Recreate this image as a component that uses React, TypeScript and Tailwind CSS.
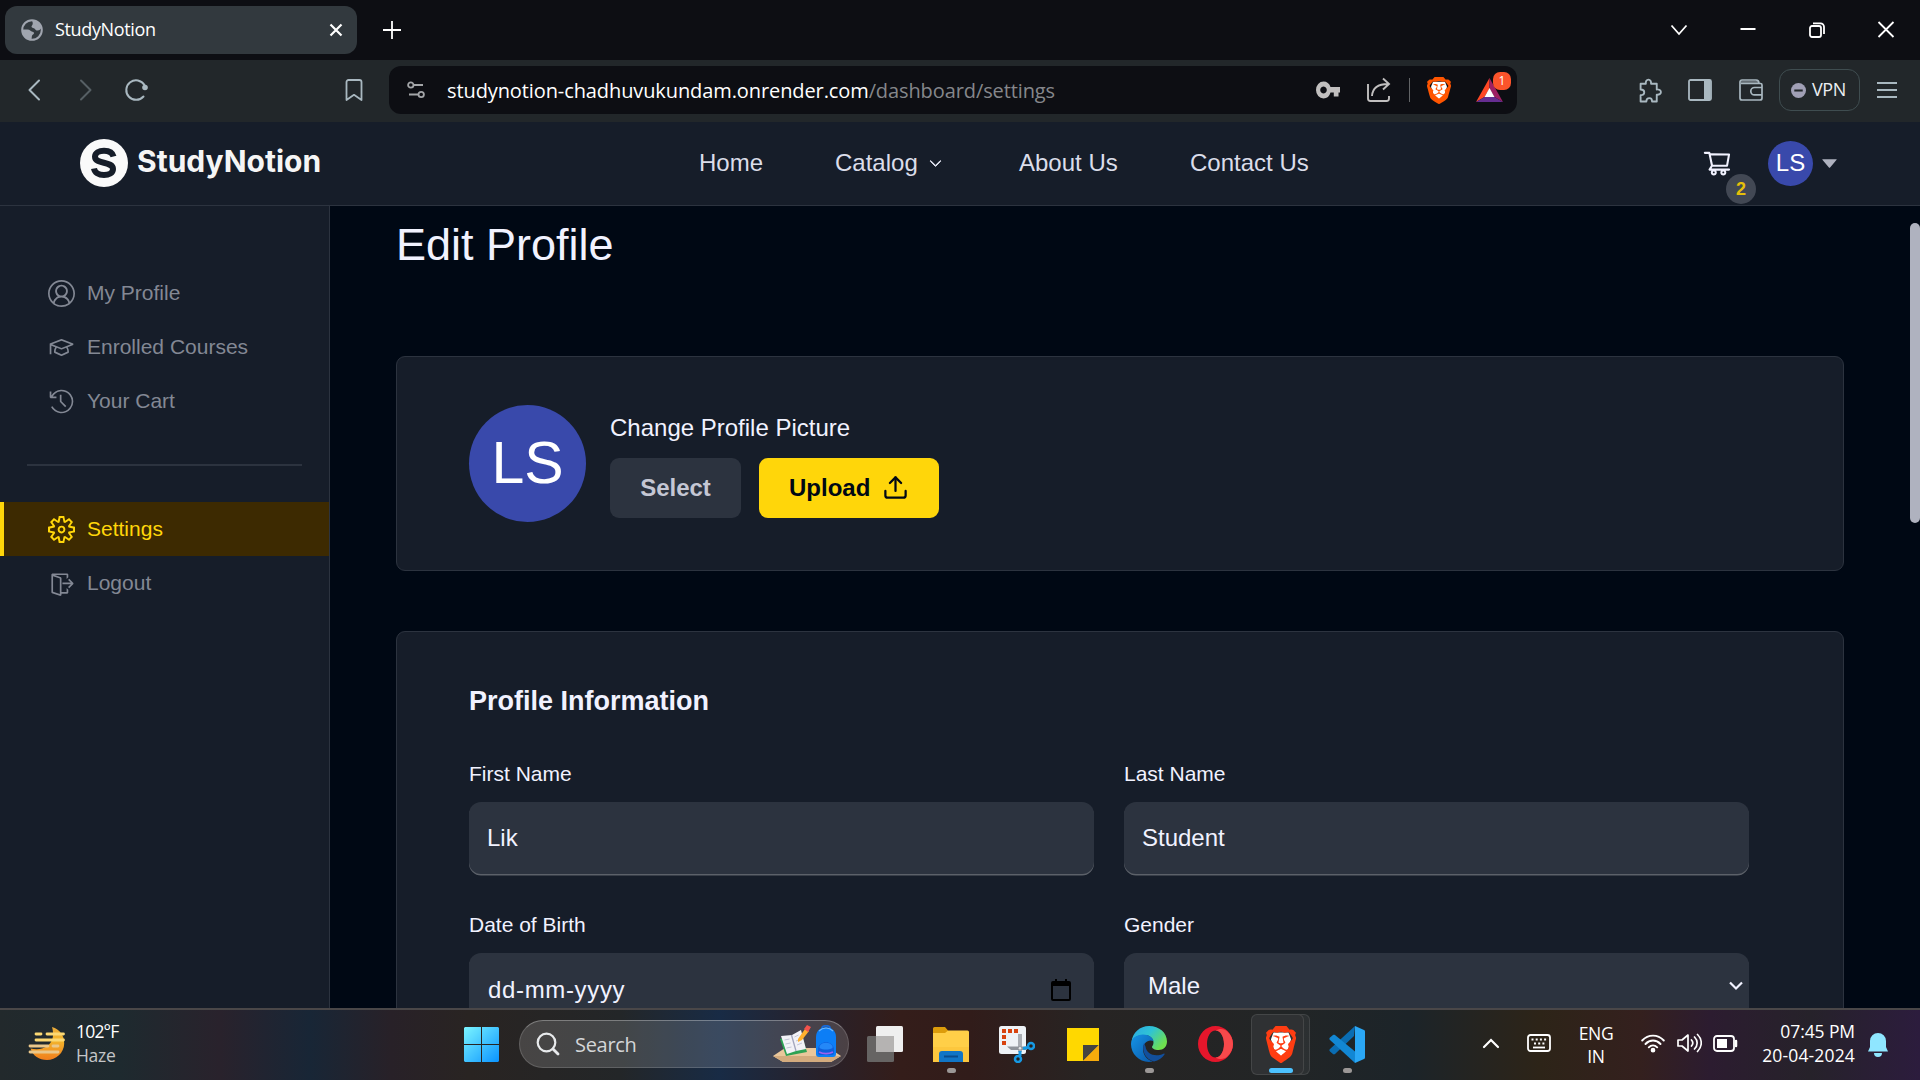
import React from "react";
import { VscAccount, VscMortarBoard, VscHistory, VscSettingsGear, VscSignOut } from "react-icons/vsc";
import { AiOutlineShoppingCart, AiOutlineCaretDown } from "react-icons/ai";
import { FiUpload } from "react-icons/fi";
import { BsChevronDown } from "react-icons/bs";
import { SiBrave } from "react-icons/si";

const SEGOE = "font-['Open_Sans','Noto_Sans',sans-serif]";

function BraveLion({ className, color }: { className: string; color: string }) {
  return (
    <span className={`relative block ${className}`}>
      <svg viewBox="0 0 24 28" preserveAspectRatio="none" className="absolute inset-0 h-full w-full">
        <path d="M6 5h12l2 5-3 10-5 5-5-5L4 10z" fill="#fff" />
      </svg>
      <SiBrave preserveAspectRatio="none" viewBox="1.9 0 20.2 24" color={color} className="relative h-full w-full" />
    </span>
  );
}

function TabStrip() {
  return (
    <div className="flex h-[60px] shrink-0 items-center bg-[#0d0e13] text-white">
      <div className="ml-[5px] flex h-12 w-[352px] items-center rounded-xl bg-[#32393e] pl-4 pr-[14px]">
        <svg viewBox="0 0 22 22" className="h-[22px] w-[22px]">
          <circle cx="11" cy="11" r="9.8" fill="#32393e" stroke="#a0a5af" strokeWidth="2" />
          <path d="M11 1.500C15 1 19 4 20.500 9c-1 1-2 2.500-4 2.500-2.500 0-2-2-4.500-2.500-1.500-.3-2-1.500-1-2.500 1-1 1-3 0-5zM1.300 10.500l5.200 0c2.500 0 3 2 5 2.300 2 .3 2 2.200.2 3C10.500 16.500 11 18 10.500 20.500 5 20.500 1 16 1.300 10.500z" fill="#a0a5af" />
        </svg>
        <span className={`-mt-px ml-[12px] text-[18px] tracking-[-0.35px] ${SEGOE}`}>StudyNotion</span>
        <svg viewBox="0 0 14 14" className="ml-auto h-[14px] w-[14px]" stroke="#fff" strokeWidth="2.200">
          <path d="M1.500 1.500l11 11M12.500 1.500l-11 11" />
        </svg>
      </div>
      <svg viewBox="0 0 20 20" className="ml-[24.500px] h-5 w-5" stroke="#fff" strokeWidth="1.800">
        <path d="M10 1v18M1 10h18" />
      </svg>
      <div className="ml-auto mr-[25.500px] flex items-center gap-[51px]">
        <svg viewBox="0 0 18 18" className="h-[18px] w-[18px]" fill="none" stroke="#fff" strokeWidth="1.800">
          <path d="M1.500 4.500L9 13l7.500-8.500" />
        </svg>
        <svg viewBox="0 0 18 18" className="h-[18px] w-[18px]" stroke="#fff" strokeWidth="2">
          <path d="M1.500 8h15" />
        </svg>
        <svg viewBox="0 0 18 18" className="h-[18px] w-[18px]" fill="none" stroke="#fff" strokeWidth="1.800">
          <rect x="2" y="5" width="11" height="11" rx="2" />
          <path d="M5 2.300h7.500a3.500 3.500 0 0 1 3.500 3.500V13" />
        </svg>
        <svg viewBox="0 0 18 18" className="h-[18px] w-[18px]" stroke="#fff" strokeWidth="1.800">
          <path d="M1.500 1l15 15M16.500 1l-15 15" />
        </svg>
      </div>
    </div>
  );
}

function Toolbar() {
  return (
    <div className="flex h-[62px] shrink-0 items-center bg-[#22272a] pb-[2px]">
      <svg viewBox="0 0 28 28" className="ml-5 h-7 w-7" fill="none" stroke="#a9b8c0" strokeWidth="2" strokeLinecap="round" strokeLinejoin="round">
        <path d="M19 4.500L9.500 14l9.500 9.500" />
      </svg>
      <svg viewBox="0 0 28 28" className="ml-[23px] h-7 w-7" fill="none" stroke="#565f64" strokeWidth="2" strokeLinecap="round" strokeLinejoin="round">
        <path d="M10 4.500l9.500 9.500-9.500 9.500" />
      </svg>
      <svg viewBox="0 0 28 28" className="ml-[23px] h-7 w-7" fill="none" stroke="#a9b8c0" strokeWidth="2" strokeLinecap="round">
        <path d="M21.500 20.500A9.800 9.800 0 1 1 22.500 9" />
        <circle cx="23" cy="11.500" r="2.800" fill="#a9b8c0" stroke="none" />
      </svg>
      <svg viewBox="0 0 28 28" className="ml-[190px] h-7 w-7" fill="none" stroke="#a9b8c0" strokeWidth="1.800" strokeLinejoin="round">
        <path d="M6.500 6a2 2 0 0 1 2-2h11a2 2 0 0 1 2 2v18L14 18.800 6.500 24z" />
      </svg>
      <div className="ml-[21px] flex h-12 w-[1128px] items-center rounded-xl bg-[#0d0e13]">
        <svg viewBox="0 0 18 18" className="ml-[18px] h-[18px] w-[18px]" fill="none" stroke="#a3a5a8" strokeWidth="1.800">
          <circle cx="3.800" cy="4" r="2.700" />
          <circle cx="14.200" cy="13.500" r="2.700" />
          <path d="M7 4h9M2 13.500h9.500" />
        </svg>
        <span className={`ml-[22px] mt-px whitespace-nowrap text-[20px] tracking-[-0.1px] text-white ${SEGOE}`}>
          studynotion-chadhuvukundam.onrender.com<span className="text-[#85878b]">/dashboard/settings</span>
        </span>
        <svg viewBox="0 0 24 18" className="ml-auto h-[18px] w-6" fill="#c1bfbf">
          <path fillRule="evenodd" d="M7.500 0.500a7.500 8.500 0 0 1 7 5.500H24v5.500h-1.500V15.500h-4.700v-4h-3.300A7.500 8.500 0 0 1 7.500 17.500 7.500 8.500 0 0 1 7.500.5zm0 5a3.300 3.500 0 1 0 .01 0z" />
        </svg>
        <svg viewBox="0 0 26 28" className="ml-[26px] h-7 w-[26px]" fill="none" stroke="#c1bfbf" strokeWidth="1.900">
          <path d="M2 8v14.500A2.500 2.500 0 0 0 4.500 25h16a2.500 2.500 0 0 0 2.500-2.500V20" />
          <path d="M6 20c.5-7 5-12 16-12M17 2.500l6 5.500-6 5.500" />
        </svg>
        <div className="ml-[17px] h-6 w-px bg-[#626466]" />
        <BraveLion className="ml-[17px] h-[27px] w-[24px]" color="#ff5500" />
        <div className="relative ml-[25px] mr-[14px] h-[24px] w-[27px]">
          <svg viewBox="0 0 27 24" className="h-[24px] w-[27px]">
            <path d="M13.500 0L0 24l8.500-5 5-8.500z" fill="#ff4724" />
            <path d="M13.500 0L27 24l-8.500-5-5-8.500z" fill="#9e1f63" />
            <path d="M0 24h27l-8.500-5h-10z" fill="#662d91" />
            <path d="M13.500 10l-5 9h10z" fill="#fff" />
          </svg>
          <span className={`absolute -top-[6px] left-[17px] flex h-[18px] w-[18px] items-center justify-center rounded-[7px] bg-[#fb542b] text-[12px] text-white ${SEGOE}`}>1</span>
        </div>
      </div>
      <div className="ml-auto mr-[22px] flex items-center text-[#a9b8c0]">
        <svg viewBox="0 0 24 24" className="h-[25px] w-[25px]" fill="none" stroke="currentColor" strokeWidth="1.800" strokeLinejoin="round">
          <path d="M2.500 5.500h5c-.3-2.300.8-4 2.500-4s2.800 1.700 2.500 4h5.500V11c2.300-.3 4 .8 4 2.500s-1.700 2.800-4 2.500v6.500h-4.500c0-2-1-3.200-2.500-3.200S8 20.500 8 22.500H2.500V16.500C4.500 16.500 6 15.500 6 13.700S4.500 11 2.500 11z" />
        </svg>
        <svg viewBox="0 0 24 22" className="ml-[25px] h-[22px] w-6">
          <rect x="1" y="1" width="22" height="20" rx="1.500" fill="none" stroke="currentColor" strokeWidth="1.800" />
          <path d="M16 1h6.500v20H16z" fill="currentColor" />
        </svg>
        <svg viewBox="0 0 24 22" className="ml-[27px] h-[22px] w-6" fill="none" stroke="currentColor" strokeWidth="1.700">
          <path d="M2 2h17v3H2z" fill="currentColor" fillOpacity=".5" stroke="none" />
          <path d="M20 4.500C20 2.500 19 1 17 1H3a2 2 0 0 0-2 2v16a2 2 0 0 0 2 2h18a2 2 0 0 0 2-2V6a1.500 1.500 0 0 0-1.500-1.500H2" />
          <path d="M23 8.500h-7.500a3.700 3.700 0 0 0 0 7.400H23" />
        </svg>
        <div className="ml-4 flex h-[42px] w-[81px] items-center rounded-xl border border-[#3f4d50] pl-[11px]">
          <svg viewBox="0 0 16 16" className="h-[15px] w-[15px]">
            <circle cx="8" cy="8" r="8" fill="#a09fb5" />
            <path d="M3.500 8h9" stroke="#22272a" strokeWidth="2.200" />
          </svg>
          <span className={`-mt-px ml-[6px] text-[18px] tracking-[-0.4px] text-[#eceff2] ${SEGOE}`}>VPN</span>
        </div>
        <svg viewBox="0 0 22 18" className="ml-[16px] h-[18px] w-[22px]" stroke="currentColor" strokeWidth="1.800">
          <path d="M1 2h20M1 9h20M1 16h20" />
        </svg>
      </div>
    </div>
  );
}

function SiteHeader() {
  return (
    <header className="flex h-[84px] shrink-0 items-center border-b border-[#2c333f] bg-[#161d29] pb-px text-[24px] text-[#dbddea]">
      <div className="ml-20 flex w-[619px] items-center">
        <svg viewBox="0 0 48 48" className="h-12 w-12">
          <circle cx="24" cy="24" r="24" fill="#fafafa" />
          <path d="M33.500 17.500C32.500 13.500 29 11.700 24 11.700c-5 0-9 2-9 6 0 8 18 4 18 12.300 0 4-4 6-9 6-5.500 0-9.300-2.500-10-6.500" fill="none" stroke="#161d29" strokeWidth="6" />
        </svg>
        <span className="-mt-[4px] ml-[9px] text-[30px] font-bold leading-none text-[#f5f5f5] font-['Inter',sans-serif]">StudyNotion</span>
      </div>
      <nav className="flex items-center whitespace-nowrap">
        <span className="w-[136px]">Home</span>
        <span className="flex w-[184px] items-center">
          Catalog
          <BsChevronDown className="ml-[11px] mt-px h-[13px] w-[13px]" strokeWidth={1.2} />
        </span>
        <span className="w-[171px]">About Us</span>
        <span>Contact Us</span>
      </nav>
      <div className="ml-auto mr-[80px] flex items-center">
        <div className="relative mr-[36px]">
          <AiOutlineShoppingCart className="h-[30px] w-[30px] text-[#f1f2ff]" />
          <span className="absolute -bottom-[26px] -right-[24px] flex h-[30px] w-[30px] items-center justify-center rounded-full bg-[#424854] text-[18px] font-bold text-[#e7c009]">2</span>
        </div>
        <div className="flex h-[45px] w-[45px] items-center justify-center rounded-full bg-[#3949ab] text-[24px] text-white">LS</div>
        <AiOutlineCaretDown className="ml-[6px] h-[21px] w-[21px] text-[#afb2bf]" />
      </div>
    </header>
  );
}

function SideLink({ icon, label, active = false }: { icon: React.ReactNode; label: string; active?: boolean }) {
  return (
    <div
      className={
        "flex h-[54px] items-center gap-3 border-l-4 pl-11 text-[21px] " +
        (active ? "border-[#ffd60a] bg-[#3d2a01] text-[#ffd60a]" : "border-transparent text-[#838894]")
      }
    >
      <span className="text-[27px]">{icon}</span>
      {label}
    </div>
  );
}

function Sidebar() {
  return (
    <aside className="w-[330px] shrink-0 border-r border-[#2c333f] bg-[#161d29] pt-[60px]">
      <SideLink icon={<VscAccount />} label="My Profile" />
      <SideLink icon={<VscMortarBoard />} label="Enrolled Courses" />
      <SideLink icon={<VscHistory />} label="Your Cart" />
      <div className="mx-[27px] mb-[36px] mt-[36px] h-[2px] bg-[#2c333f]" />
      <SideLink icon={<VscSettingsGear />} label="Settings" active />
      <SideLink icon={<VscSignOut />} label="Logout" />
    </aside>
  );
}

function Field({ label, children }: { label: string; children: React.ReactNode }) {
  return (
    <div className="w-[625px]">
      <div className="text-[21px] leading-[30px]">{label}</div>
      <div className="mt-[13px] flex h-[72px] items-center rounded-[12px] bg-[#2c333f] text-[24px] shadow-[0_1.5px_0_rgba(255,255,255,0.3)]">
        {children}
      </div>
    </div>
  );
}

function Settings() {
  return (
    <main className="relative grow overflow-hidden bg-[#000814] pl-[66px] text-[#f1f2ff]">
      <h1 className="mt-[12px] text-[45px] leading-[54px]">Edit Profile</h1>
      <section className="mt-[84px] flex h-[215px] w-[1448px] items-center rounded-[9px] border border-[#2c333f] bg-[#161d29] pl-[72px]">
        <div className="flex h-[117px] w-[117px] items-center justify-center rounded-full bg-[#3949ab] text-[59px] text-white">LS</div>
        <div className="ml-6">
          <p className="text-[24px] leading-9">Change Profile Picture</p>
          <div className="mt-[12px] flex gap-[18px] text-[24px] font-bold">
            <div className="flex h-[60px] w-[131px] items-center justify-center rounded-[9px] bg-[#2c333f] text-[#c5c7d4]">Select</div>
            <div className="flex h-[60px] w-[180px] items-center rounded-[9px] bg-[#ffd60a] pl-[30px] text-[#000814]">
              Upload
              <FiUpload className="ml-[12px] h-[27px] w-[27px]" />
            </div>
          </div>
        </div>
      </section>
      <section className="mt-[60px] h-[500px] w-[1448px] rounded-[9px] border border-[#2c333f] bg-[#161d29] pl-[72px] pt-[51px]">
        <h2 className="text-[27px] font-bold leading-9">Profile Information</h2>
        <div className="mt-[40px] flex gap-[30px]">
          <Field label="First Name"><span className="pl-[18px]">Lik</span></Field>
          <Field label="Last Name"><span className="pl-[18px]">Student</span></Field>
        </div>
        <div className="mt-[36px] flex gap-[30px]">
          <Field label="Date of Birth">
            <span className="pl-[19px] pt-[2px] tracking-[0.66px]">dd-mm-yyyy</span>
            <svg viewBox="0 0 20 22" className="ml-auto mr-[23px] mt-[2px] h-[22px] w-5" fill="#000">
              <path fillRule="evenodd" d="M4 0h2v2h8V0h2v2h2a2 2 0 0 1 2 2v16a2 2 0 0 1-2 2H2a2 2 0 0 1-2-2V4a2 2 0 0 1 2-2h2zM2 7v13h16V7z" />
            </svg>
          </Field>
          <Field label="Gender">
            <span className="-mt-[7px] pl-6">Male</span>
            <svg viewBox="0 0 14 10" className="-mt-[7px] ml-auto mr-[6px] h-[10px] w-[14px]" fill="none" stroke="#f1f2ff" strokeWidth="2.200">
              <path d="M1 1.500l6 6 6-6" />
            </svg>
          </Field>
        </div>
      </section>
      <div className="absolute right-0 top-[17px] h-[300px] w-[10px] rounded-full bg-[#afb2bf]" />
    </main>
  );
}

function TaskCell({ children, mark = "none" }: { children: React.ReactNode; mark?: "none" | "dot" }) {
  return (
    <div className="relative flex h-full w-[66px] items-center justify-center pb-[2px]">
      {children}
      {mark === "dot" && <span className="absolute bottom-[7px] left-[29px] h-[5px] w-[9px] rounded-full bg-[#9b9796]" />}
    </div>
  );
}

function Taskbar() {
  return (
    <footer
      className={`flex h-[72px] shrink-0 items-center border-t-2 border-[#4a4748] bg-[linear-gradient(90deg,#22292c_0px,#1e2a2f_120px,#29222c_220px,#182636_310px,#282128_390px,#292422_470px,#232628_620px,#182b45_720px,#28212a_820px,#341d1a_900px,#311c1a_970px,#272423_1090px,#222526_1280px,#1c2429_1410px,#2d2418_1540px,#34201e_1640px,#2c1c30_1710px,#26222a_1810px,#2c1c3d_1920px)] text-white ${SEGOE}`}
    >
      <svg viewBox="0 0 37 34" className="-mt-[2px] ml-[28px] h-[34px] w-[37px]">
        <defs>
          <linearGradient id="haze" x1="0" y1="0" x2="0" y2="1">
            <stop offset="0" stopColor="#e9a93a" />
            <stop offset=".4" stopColor="#f3b62c" />
            <stop offset="1" stopColor="#f07e1d" />
          </linearGradient>
        </defs>
        <path d="M24 0c8 2.500 12.500 9 12.200 16.500C36 26 28 33 19 33 11 33 5 29 2.500 21.500c6 1.500 13 1 18-3.500S26 7 24 0z" fill="url(#haze)" />
        <g stroke="#fbd873" strokeWidth="2.800" strokeLinecap="round">
          <path d="M8 7h5M19 7h16.500M8 13h27.500" />
          <path d="M2 19h18M25 19h5M2 25h28" stroke="#eac78a" />
        </g>
      </svg>
      <div className="-mt-[4px] ml-[11px] w-[388px] text-[17.500px] leading-6 tracking-[-0.3px]">
        <div className="tracking-[-0.8px]">102°F</div>
        <div className="text-[#c4c6c8]">Haze</div>
      </div>
      <svg viewBox="0 0 35 35" className="-mt-px h-[35px] w-[35px]">
        <defs>
          <linearGradient id="win" x1="0" y1="0" x2="35" y2="35" gradientUnits="userSpaceOnUse">
            <stop offset="0" stopColor="#7bf5ff" />
            <stop offset="1" stopColor="#0a93ff" />
          </linearGradient>
        </defs>
        <path d="M1 0h16v17H0V1zM18 0h16l1 1v16H18zM0 18h17v17H1l-1-1zM18 18h17v16l-1 1H18z" fill="url(#win)" />
      </svg>
      <div className="-mt-[2px] ml-5 flex h-12 w-[330px] items-center rounded-full border border-white/15 border-t-white/30 bg-white/15 pl-[16px] pr-[7px]">
        <svg viewBox="0 0 24 24" className="h-6 w-6" fill="none" stroke="#e8eaec" strokeWidth="2.200" strokeLinecap="round">
          <circle cx="10.500" cy="10.500" r="8.800" />
          <path d="M17 17l5 5" strokeWidth="2.800" />
        </svg>
        <span className="ml-[15px] mt-px text-[20px] tracking-[-0.3px] text-[#d4d6d8]">Search</span>
        <svg viewBox="0 0 68 38" className="ml-auto h-[38px] w-[68px]">
          <path d="M0 31l12-8h44l12 8-10 6H10z" fill="#e9c79b" />
          <path d="M0 31h68l-10 6H10z" fill="#d3ab7e" />
          <path d="M7 14l21-6 6 19-21 4z" fill="#2da254" />
          <path d="M8 11l11-1 9-5 5 19-10 2-9 3z" fill="#f2f2f7" />
          <path d="M18.500 10l4.500 16" stroke="#a2a5bd" strokeWidth="1.300" />
          <path d="M11.500 15l5-1M12.500 19l5-1M13.500 23l5-1M21.500 12l4-2M23 16l5-2M24 20l5-2" stroke="#c3c5d6" strokeWidth="1" />
          <path d="M25 14l7-10 4 2-7 9-4 2z" fill="#ffb02e" />
          <path d="M31 4l3-4 4 2-3 5z" fill="#f4524c" />
          <path d="M49 3c0-3 8-3 8 0" stroke="#1769d8" strokeWidth="1.800" fill="none" />
          <path d="M43 12c0-13 20-13 20 0v17a3 3 0 0 1-3 3H46a3 3 0 0 1-3-3z" fill="#0c7ef6" />
          <path d="M46 6c4-4 10-4 14 0" stroke="#6db8ff" strokeWidth="1.200" fill="none" />
          <path d="M45 24c1-9 15-9 16 0v4a2 2 0 0 1-2 2H47a2 2 0 0 1-2-2z" fill="#0e5fdc" />
          <path d="M46.500 21c2-4.500 11-4.500 13 0v2c-4 2-9 2-13 0z" fill="#2488f8" />
          <path d="M46 27c4 2 10 2 14 0" stroke="#9b62ee" strokeWidth="1.800" fill="none" />
        </svg>
      </div>
      <div className="ml-[3px] flex h-full items-center">
        <TaskCell>
          <svg viewBox="0 0 36 36" className="h-9 w-9">
            <rect x="9" y="0" width="27" height="26" rx="1.500" fill="#efefef" />
            <rect x="0" y="10" width="27" height="26" rx="1.500" fill="#666463" />
            <path d="M9 10h18v16H9z" fill="#b5b3b2" />
          </svg>
        </TaskCell>
        <TaskCell mark="dot">
          <svg viewBox="0 0 36 35" className="h-[35px] w-9">
            <path d="M0 1.500A1.500 1.500 0 0 1 1.500 0H12l3 3.500V7H0z" fill="#dc9c0b" />
            <path d="M0 6h12l3-2.500h19.500A1.500 1.500 0 0 1 36 5v30H0z" fill="#ffcf48" />
            <path d="M0 20h36v15H0z" fill="#f9bf33" opacity=".5" />
            <path d="M6 35V27a3 3 0 0 1 3-3h18a3 3 0 0 1 3 3v8z" fill="#1175c6" />
            <path d="M11 29.500h14" stroke="#0a4c8c" strokeWidth="2" />
          </svg>
        </TaskCell>
        <TaskCell>
          <svg viewBox="0 0 36 37" className="h-[37px] w-9">
            <rect width="27" height="28" rx="2.500" fill="#eef2f6" />
            <path d="M3 5h17M5 3v17" stroke="#d8430f" strokeWidth="4" strokeDasharray="4 2" />
            <path d="M19 8h4v18h-4z" fill="#a9adb3" />
            <path d="M8 20.500h20v3.500H12z" fill="#8f949b" />
            <circle cx="21" cy="22.300" r="1.300" fill="#e6e8ea" />
            <path d="M24 22.500l5-1M21 25v5" stroke="#1699e4" strokeWidth="3" />
            <circle cx="32" cy="20" r="3" fill="#24201f" stroke="#1699e4" strokeWidth="2.500" />
            <circle cx="19" cy="33" r="3" fill="#24201f" stroke="#1699e4" strokeWidth="2.500" />
          </svg>
        </TaskCell>
        <TaskCell>
          <svg viewBox="0 0 32 33" className="h-[33px] w-8">
            <path d="M0 0h32v33H0z" fill="#ffd800" />
            <path d="M16 33V17h16z" fill="#444341" />
            <path d="M16 33l16-16v16z" fill="#f7ab0c" />
          </svg>
        </TaskCell>
        <TaskCell mark="dot">
          <svg viewBox="0 0 36 36" className="h-9 w-9">
            <defs>
              <linearGradient id="edgeTop" x1="0" y1="0" x2="1" y2=".6">
                <stop offset="0" stopColor="#2aa6e6" />
                <stop offset=".5" stopColor="#2fc3d5" />
                <stop offset="1" stopColor="#6fe04e" />
              </linearGradient>
              <linearGradient id="edgeLow" x1="0" y1="0" x2="1" y2="1">
                <stop offset="0" stopColor="#1594e6" />
                <stop offset="1" stopColor="#0a57a8" />
              </linearGradient>
            </defs>
            <path d="M.5 16C1.500 6.500 9 0 18 0c10.500 0 18 7 18 15.500 0 5-3.500 8.500-8.500 8.500-4 0-6.500-1.500-6.500-3 0-1 1.500-1.500 1.500-4.500 0-4-4-7.500-9-7.500C7 9 2.500 11.500.5 16z" fill="url(#edgeTop)" />
            <path d="M0 18c0-6 6-9.500 12-9.500 6 0 10 3 10.500 6.500C17 13 12 17 12 23c0 6 4 11 10 12.500C10 38 0 29 0 18z" fill="url(#edgeLow)" />
            <path d="M13 17c-3 8 2 17 10 18.500 4.500-.8 8-3.500 10.500-7 .4-.7-.2-1.200-1-.8-8 3.500-17 .8-18-7.200z" fill="#124f9c" />
          </svg>
        </TaskCell>
        <TaskCell>
          <svg viewBox="0 0 35 36" className="h-9 w-[35px]">
            <path fillRule="evenodd" d="M17.500 0C27 0 35 8 35 18s-8 18-17.500 18S0 28 0 18 8 0 17.500 0zm0 4.500c-5 0-8.500 6-8.500 13.500s3.500 13.500 8.500 13.500S26 25.500 26 18 22.500 4.500 17.500 4.500z" fill="#e5162b" />
            <path d="M17.500 4.500c4-2.500 9-2 12 1.200C33 9 35 13 35 18s-2 9-5.500 12.300c-3 3.200-8 3.700-12 1.200C22.500 31.500 26 25.500 26 18S22.500 4.500 17.500 4.500z" fill="#f7494b" />
          </svg>
        </TaskCell>
        <div className="relative h-full w-[66px]">
          <span className="absolute left-[13px] top-[4px] h-[61px] w-[49px] rounded-[6px] border border-white/10 bg-white/5" />
          <span className="absolute left-[3px] top-[4px] h-[61px] w-[53px] rounded-[6px] border border-white/10 bg-[#2f3133]" />
          <BraveLion className="absolute! left-[18px] top-[16px] h-[37px] w-[30px]" color="#ff3d12" />
          <span className="absolute bottom-[7px] left-[21px] h-[5px] w-6 rounded-full bg-[#4cc2ff]" />
        </div>
        <TaskCell mark="dot">
          <svg viewBox="0 0 36 37" className="h-[37px] w-9">
            <path d="M26 0l-1 10L6 28c-.8.6-1.500.5-2 0l-3-2.500c-.8-.8-.8-1.800 0-2.500z" fill="#0a6db3" />
            <path d="M1 11.500L4 9c.7-.5 1.300-.5 2 0l20 16.500V37L1 14c-.8-.8-.8-1.700 0-2.500z" fill="#1287d4" />
            <path d="M26 0l9 4c.7.3 1 .8 1 1.500v26c0 .7-.3 1.200-1 1.500l-9 4z" fill="#2aa7f5" />
          </svg>
        </TaskCell>
      </div>
      <div className="-mt-[4px] ml-auto mr-[31px] flex items-center">
        <svg viewBox="0 0 18 12" className="h-3 w-[18px]" fill="none" stroke="#fff" strokeWidth="2.200" strokeLinecap="round">
          <path d="M2 10l7-7 7 7" />
        </svg>
        <svg viewBox="0 0 24 18" className="ml-[27px] h-[18px] w-6" fill="none" stroke="#fff">
          <rect x="1" y="1" width="22" height="16" rx="2.500" strokeWidth="1.800" />
          <path d="M4.500 5.500h15M7 9.500h11" strokeWidth="2" strokeDasharray="2 2.200" />
          <path d="M6 13.500h12" strokeWidth="1.800" />
        </svg>
        <div className="ml-[22px] mt-[3px] w-[46px] text-center text-[17.500px] leading-[23px] tracking-[-0.3px]">
          ENG
          <br />
          IN
        </div>
        <svg viewBox="0 0 24 20" className="ml-[22px] h-5 w-6" fill="none" stroke="#fff" strokeWidth="1.900" strokeLinecap="round">
          <path d="M1.200 7.500c6-6.500 15.600-6.500 21.600 0M4.500 11c4.300-4.600 10.700-4.600 15 0M7.800 14.300c2.500-2.600 5.900-2.600 8.400 0" />
          <circle cx="12" cy="17.200" r="1.400" fill="#fff" />
        </svg>
        <svg viewBox="0 0 25 20" className="ml-3 h-5 w-[25px]" fill="none" stroke="#fff" strokeWidth="1.700" strokeLinejoin="round" strokeLinecap="round">
          <path d="M1 7v6h4l6 5V2L5 7z" />
          <path d="M14.500 7c1.500 1.700 1.500 4.300 0 6M17.500 4c3.500 3.500 3.500 8.500 0 12M20.500 1.500c5 5 5 12 0 17" />
        </svg>
        <svg viewBox="0 0 25 17" className="ml-[11px] h-[17px] w-[25px]" fill="none" stroke="#fff" strokeWidth="1.800">
          <rect x="1" y="1" width="20" height="15" rx="3" />
          <path d="M4 4h10v9H4z" fill="#fff" stroke="none" />
          <path d="M23 6v5" strokeWidth="2.500" strokeLinecap="round" />
        </svg>
        <div className="ml-[17px] w-[100px] whitespace-nowrap text-right text-[17.500px] leading-6">
          <span className="tracking-[-0.1px]">07:45 PM</span>
          <br />
          <span className="tracking-[0.15px]">20-04-2024</span>
        </div>
        <svg viewBox="0 0 22 24" className="ml-[12px] mt-[3px] h-6 w-[22px]" fill="#8fe6ff">
          <path d="M11 0a8 8 0 0 1 8 8v6l2 4.500H1L3 14V8a8 8 0 0 1 8-8zM7 20h8a4 4 0 0 1-8 0z" />
        </svg>
      </div>
    </footer>
  );
}

export default function App() {
  return (
    <div className="flex h-[1080px] w-[1920px] flex-col overflow-hidden bg-[#000814] font-['Liberation_Sans',Arial,sans-serif]">
      <TabStrip />
      <Toolbar />
      <SiteHeader />
      <div className="flex min-h-0 grow overflow-hidden">
        <Sidebar />
        <Settings />
      </div>
      <Taskbar />
    </div>
  );
}
